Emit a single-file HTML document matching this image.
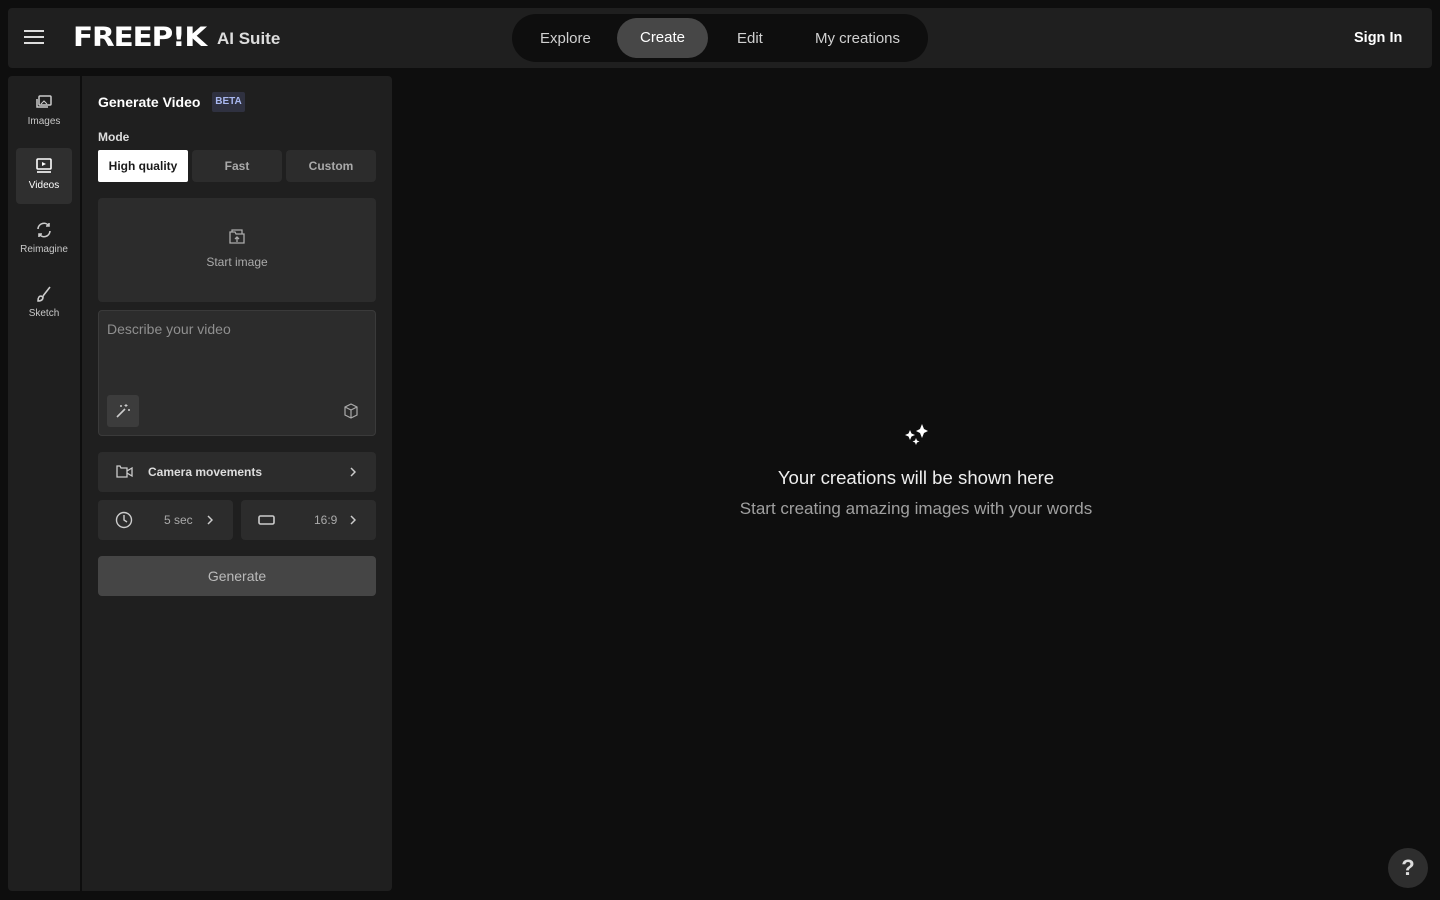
<!DOCTYPE html>
<html><head><meta charset="utf-8"><style>
*{box-sizing:border-box;margin:0;padding:0}
body{width:1440px;height:900px;background:#0e0e0e;font-family:"Liberation Sans",sans-serif;color:#fff;position:relative;overflow:hidden}
.abs{position:absolute}
.hdr{left:8px;top:8px;width:1424px;height:60px;background:#1f1f1f;border-radius:4px}
.nav{left:512px;top:14px;width:416px;height:48px;background:#0e0e0e;border-radius:24px}
.nav span{position:absolute;top:1px;line-height:48px;font-size:15px;color:#d0d0d0}
.side{left:8px;top:76px;width:72px;height:815px;background:#1f1f1f;border-radius:4px 0 0 4px}
.panel{left:82px;top:76px;width:310px;height:815px;background:#1f1f1f;border-radius:0 4px 4px 0}
.ni{position:absolute;left:8px;width:56px;height:56px;text-align:center;font-size:10px;color:#c8c8c8;border-radius:4px}
.ni svg{display:block;margin:10px auto 6px}
.box{background:#2c2c2c;border-radius:4px}
.t{font-size:12px;color:#ccc}
</style></head><body>
<div class="abs hdr"></div>
<svg class="abs" style="left:24px;top:29px" width="20" height="16"><path d="M0 2h20M0 8h20M0 14h20" stroke="#ddd" stroke-width="2"/></svg>
<div class="abs" style="left:73px;top:22px;font-size:27px;font-weight:900;letter-spacing:-1px;font-family:'DejaVu Sans',sans-serif;transform:scaleX(1.09);transform-origin:left">FREEP!K</div>
<div class="abs" style="left:217px;top:29px;font-size:17px;font-weight:bold;color:#ddd">AI Suite</div>
<div class="abs nav">
<span style="left:28px">Explore</span>
<span style="left:105px;width:91px;height:40px;top:4px;line-height:40px;text-align:center;background:#474747;border-radius:20px;color:#fff">Create</span>
<span style="left:225px">Edit</span>
<span style="left:303px">My creations</span>
</div>
<div class="abs" style="left:1354px;top:30px;font-size:14.5px;font-weight:bold">Sign In</div>

<div class="abs side">
<div class="ni" style="top:8px"><svg width="18" height="16" viewBox="0 0 18 16"><rect x="4" y="2" width="12" height="9" rx="1" fill="none" stroke="#ccc" stroke-width="1.5"/><path d="M2 5v8h11" fill="none" stroke="#ccc" stroke-width="1.5"/><path d="M6 10l3-3 3 3" stroke="#ccc" fill="none"/></svg>Images</div>
<div class="ni" style="top:72px;background:#2f2f2f;color:#fff"><svg width="18" height="16" viewBox="0 0 18 16"><rect x="2" y="1" width="14" height="10" rx="1" fill="none" stroke="#fff" stroke-width="1.6"/><path d="M7 4v4l4-2z" fill="#fff"/><path d="M2 14h14" stroke="#fff" stroke-width="1.6"/></svg>Videos</div>
<div class="ni" style="top:136px"><svg width="18" height="16" viewBox="0 0 18 16"><path d="M3 7a6 6 0 0 1 11-3M15 9a6 6 0 0 1-11 3M14 1v3h-3M4 15v-3h3" fill="none" stroke="#ccc" stroke-width="1.6"/></svg>Reimagine</div>
<div class="ni" style="top:200px"><svg width="18" height="16" viewBox="0 0 18 16"><path d="M15 1L8 10M3 15c0-3 1-5 3-5l2 1c0 3-2 4-5 4z" fill="none" stroke="#ccc" stroke-width="1.6"/></svg>Sketch</div>
</div>

<div class="abs panel"></div>
<div class="abs" style="left:98px;top:94px;font-size:14px;font-weight:bold">Generate Video</div>
<div class="abs" style="left:212px;top:92px;width:33px;height:20px;background:#2f3140;border-radius:2px;font-size:10px;line-height:20px;text-align:center;color:#a9b8f0;font-weight:bold">BETA</div>
<div class="abs" style="left:98px;top:130px;font-size:12px;font-weight:bold;color:#ddd">Mode</div>
<div class="abs" style="left:98px;top:150px;width:90px;height:32px;background:#fff;border-radius:2px;color:#1a1a1a;font-size:12px;font-weight:bold;line-height:32px;text-align:center">High quality</div>
<div class="abs box" style="left:192px;top:150px;width:90px;height:32px;font-size:12px;font-weight:bold;color:#aaa;line-height:32px;text-align:center">Fast</div>
<div class="abs box" style="left:286px;top:150px;width:90px;height:32px;font-size:12px;font-weight:bold;color:#aaa;line-height:32px;text-align:center">Custom</div>
<div class="abs box" style="left:98px;top:198px;width:278px;height:104px"></div>
<svg class="abs" style="left:229px;top:229px" width="16" height="15" viewBox="0 0 16 15"><path d="M1 3h5l1 2h8v9H1z M3 3V1h10v4" fill="none" stroke="#aaa" stroke-width="1.3"/><path d="M8 13V8M6 10l2-2 2 2" stroke="#aaa" fill="none" stroke-width="1.3"/></svg>
<div class="abs t" style="left:98px;width:278px;text-align:center;top:255px;color:#aaa">Start image</div>
<div class="abs box" style="left:98px;top:310px;width:278px;height:126px;border:1px solid #3a3a3a"></div>
<div class="abs" style="left:107px;top:321px;font-size:14px;color:#8f8f8f">Describe your video</div>
<div class="abs" style="left:107px;top:395px;width:32px;height:32px;background:#3c3c3c;border-radius:3px"></div>
<svg class="abs" style="left:115px;top:403px" width="16" height="16" viewBox="0 0 16 16"><path d="M2 14l8-8" stroke="#ccc" stroke-width="1.6"/><path d="M11 1v3M9.5 2.5h3M14 6v2M13 7h2M6 2v2M5 3h2" stroke="#ccc"/></svg>
<svg class="abs" style="left:343px;top:403px" width="16" height="16" viewBox="0 0 16 16"><path d="M8 1l6 3v8l-6 3-6-3V4z M2 4l6 3 6-3M8 7v8" fill="none" stroke="#aaa" stroke-width="1.2"/></svg>
<div class="abs box" style="left:98px;top:452px;width:278px;height:40px"></div>
<svg class="abs" style="left:116px;top:465px" width="17" height="13" viewBox="0 0 17 13"><path d="M1 1h3l1 2h6v9H1zM11 6l5-3v8l-5-3" fill="none" stroke="#ccc" stroke-width="1.3"/></svg>
<div class="abs" style="left:148px;top:465px;font-size:12px;font-weight:bold;color:#ddd">Camera movements</div>
<svg class="abs" style="left:350px;top:467px" width="6" height="10"><path d="M1 1l4 4-4 4" fill="none" stroke="#ccc" stroke-width="1.5"/></svg>
<div class="abs box" style="left:98px;top:500px;width:135px;height:40px"></div>
<svg class="abs" style="left:115px;top:511px" width="18" height="18" viewBox="0 0 18 18"><circle cx="9" cy="9" r="7.5" fill="none" stroke="#ccc" stroke-width="1.4"/><path d="M9 4v5l3 2" fill="none" stroke="#ccc" stroke-width="1.4"/></svg>
<div class="abs t" style="left:164px;top:513px;color:#aaa">5 sec</div>
<svg class="abs" style="left:207px;top:515px" width="6" height="10"><path d="M1 1l4 4-4 4" fill="none" stroke="#ccc" stroke-width="1.5"/></svg>
<div class="abs box" style="left:241px;top:500px;width:135px;height:40px"></div>
<svg class="abs" style="left:258px;top:514px" width="18" height="12"><rect x="1" y="2" width="15" height="8" rx="1.5" fill="none" stroke="#ccc" stroke-width="1.6"/></svg>
<div class="abs t" style="left:314px;top:513px;color:#aaa">16:9</div>
<svg class="abs" style="left:350px;top:515px" width="6" height="10"><path d="M1 1l4 4-4 4" fill="none" stroke="#ccc" stroke-width="1.5"/></svg>
<div class="abs" style="left:98px;top:556px;width:278px;height:40px;background:#454545;border-radius:4px;text-align:center;line-height:40px;font-size:14px;color:#bbb">Generate</div>

<svg class="abs" style="left:903px;top:424px" width="26" height="24" viewBox="0 0 26 24"><path d="M19 0l2 5 4 2-4 2-2 5-2-5-4-2 4-2z M7 6l1.5 3.5L12 11l-3.5 1.5L7 16l-1.5-3.5L2 11l3.5-1.5z M13 14l1 2.5 2.5 1-2.5 1-1 2.5-1-2.5-2.5-1 2.5-1z" fill="#fff"/></svg>
<div class="abs" style="left:566px;width:700px;text-align:center;top:467px;font-size:18.6px;color:#eee">Your creations will be shown here</div>
<div class="abs" style="left:566px;width:700px;text-align:center;top:499px;font-size:17px;color:#a0a0a0">Start creating amazing images with your words</div>
<div class="abs" style="left:1388px;top:848px;width:40px;height:40px;border-radius:50%;background:#2e2e2e;text-align:center;line-height:40px;font-size:22px;font-weight:bold;color:#ddd">?</div>
</body></html>
